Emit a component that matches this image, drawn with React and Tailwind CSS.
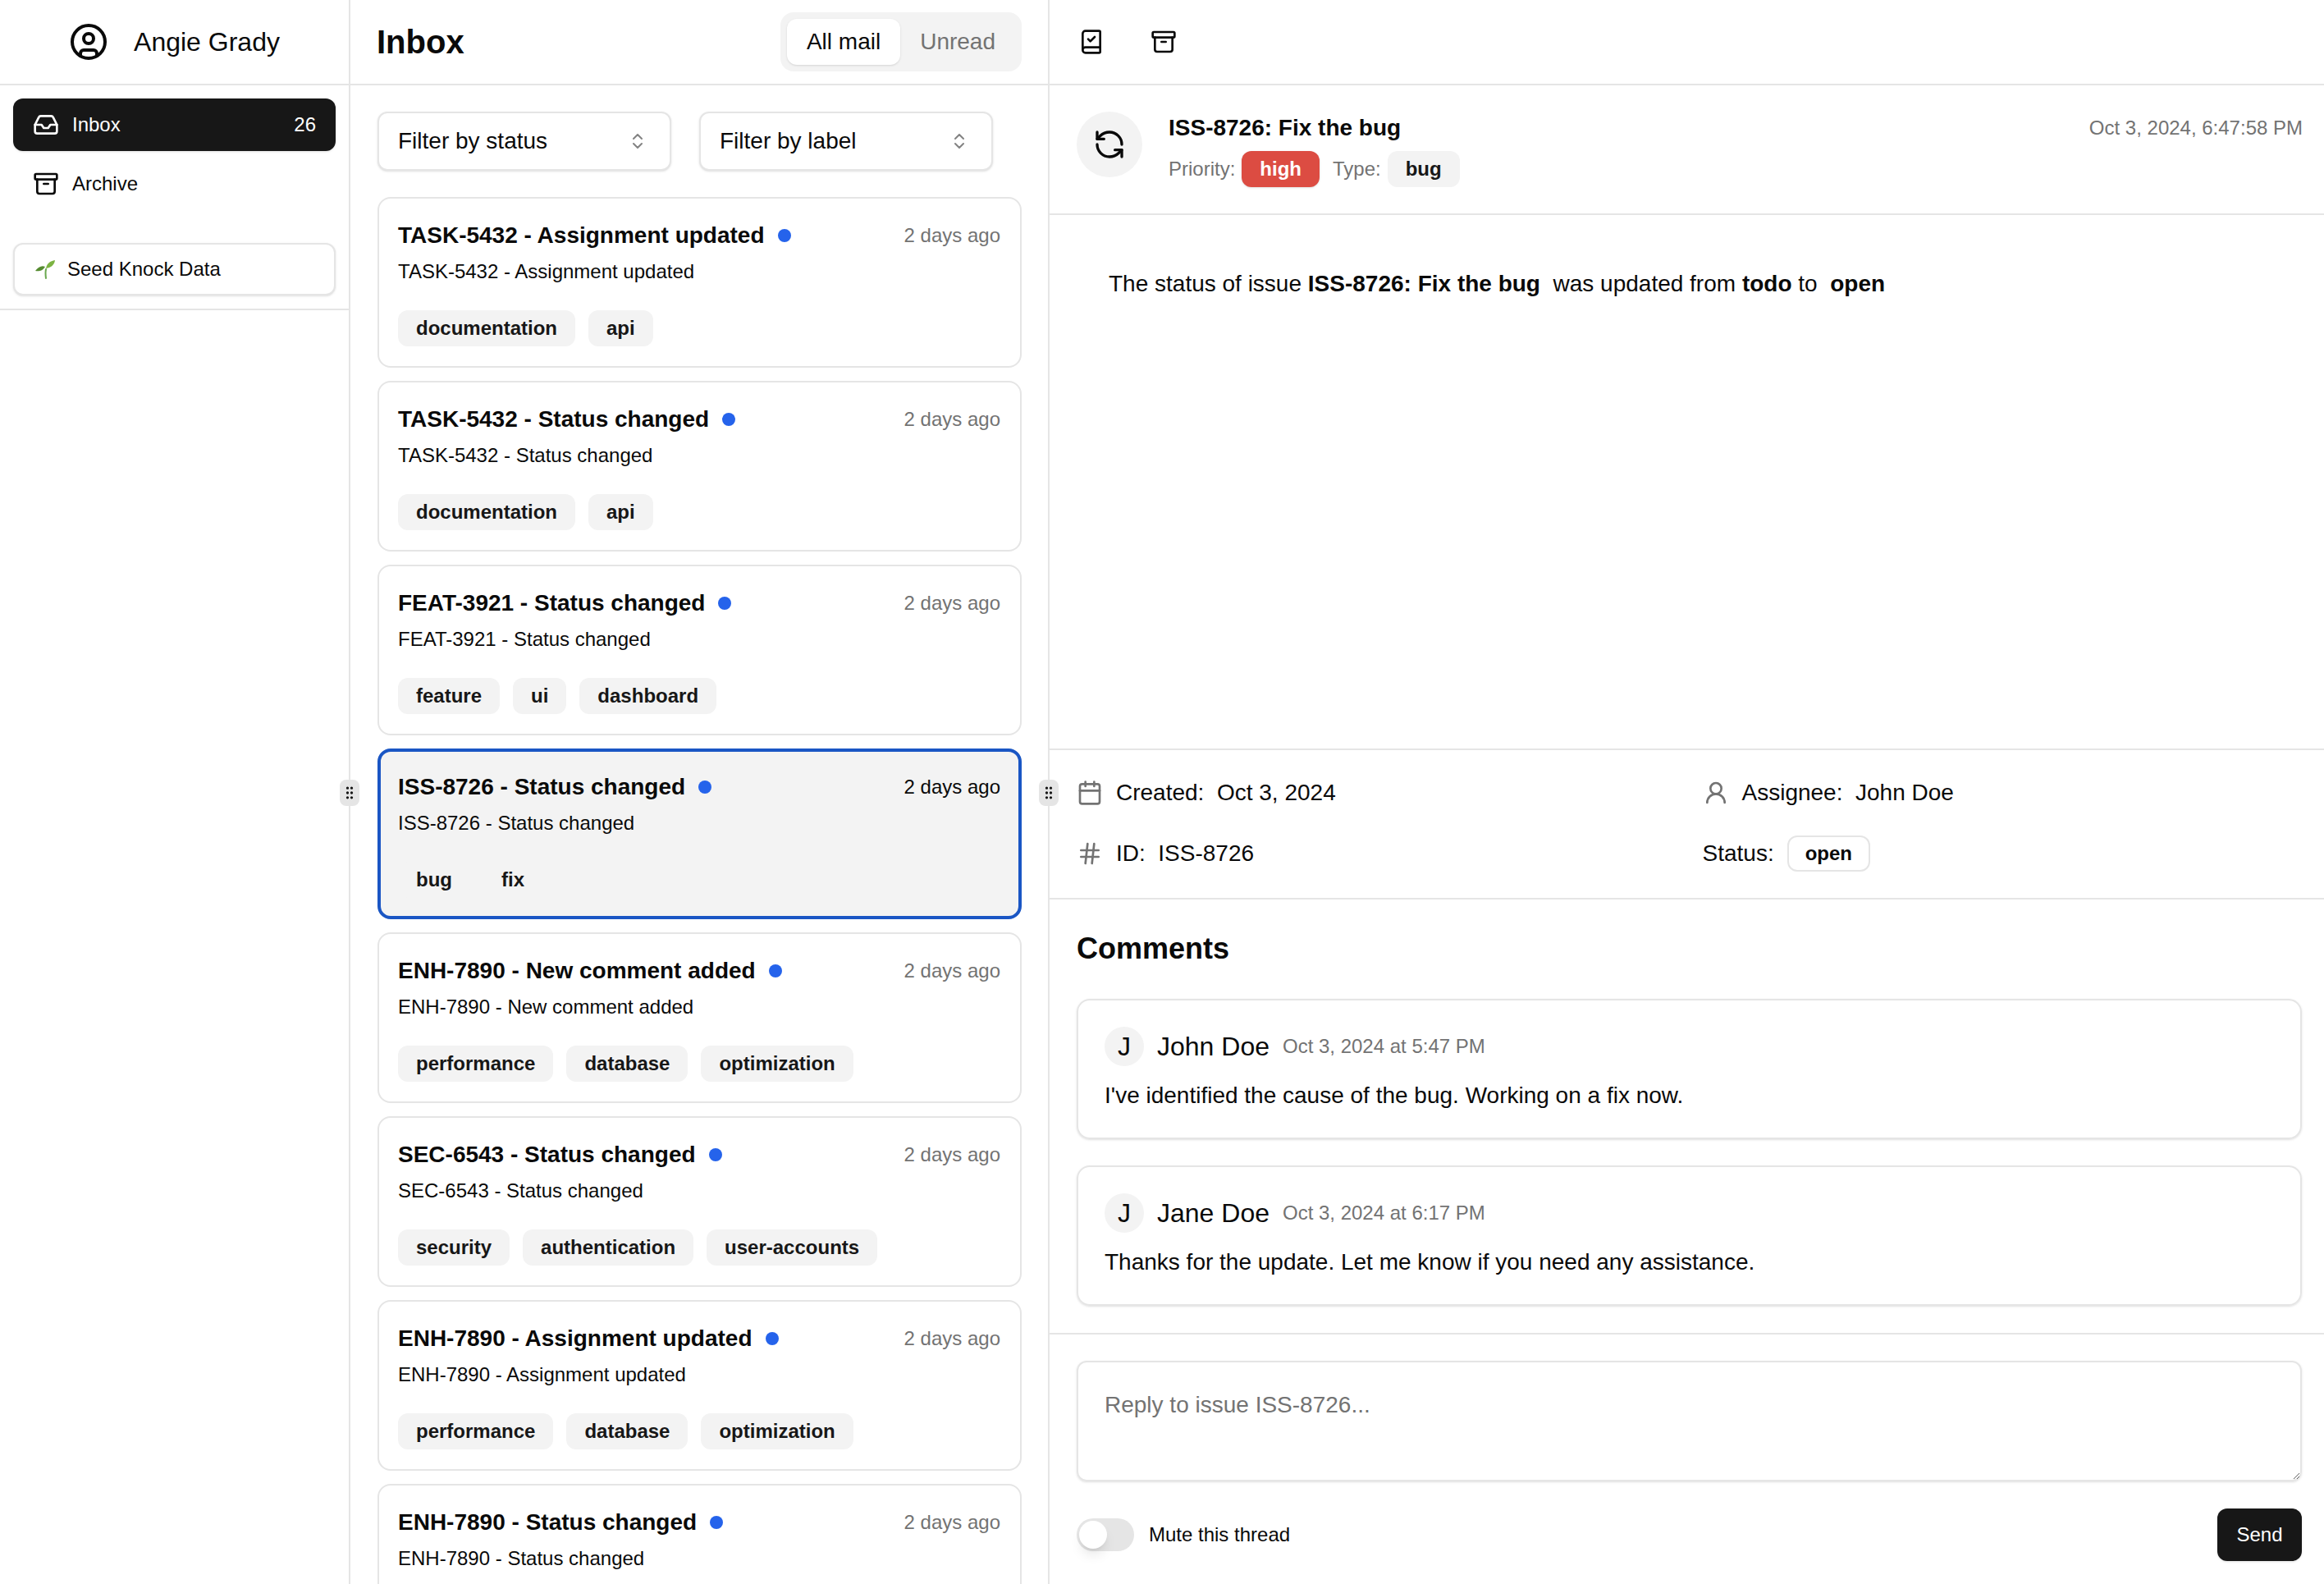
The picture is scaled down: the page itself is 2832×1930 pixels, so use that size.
import React from 'react';
import {
  Archive,
  BookCheck,
  Calendar,
  ChevronsUpDown,
  CircleUser,
  GripVertical,
  Hash,
  Inbox,
  RefreshCcw,
  UserRound,
} from 'lucide-react';

const notifications = [
  { id: 'TASK-5432', event: 'Assignment updated', labels: ['documentation', 'api'] },
  { id: 'TASK-5432', event: 'Status changed', labels: ['documentation', 'api'] },
  { id: 'FEAT-3921', event: 'Status changed', labels: ['feature', 'ui', 'dashboard'] },
  { id: 'ISS-8726', event: 'Status changed', labels: ['bug', 'fix'], selected: true },
  { id: 'ENH-7890', event: 'New comment added', labels: ['performance', 'database', 'optimization'] },
  { id: 'SEC-6543', event: 'Status changed', labels: ['security', 'authentication', 'user-accounts'] },
  { id: 'ENH-7890', event: 'Assignment updated', labels: ['performance', 'database', 'optimization'] },
  { id: 'ENH-7890', event: 'Status changed', labels: [] },
];

const comments = [
  { name: 'John Doe', date: 'Oct 3, 2024 at 5:47 PM', body: "I've identified the cause of the bug. Working on a fix now." },
  { name: 'Jane Doe', date: 'Oct 3, 2024 at 6:17 PM', body: 'Thanks for the update. Let me know if you need any assistance.' },
];

function SproutIcon() {
  return (
    <svg width="26" height="24" viewBox="0 0 26 24" className="shrink-0">
      <path d="M14 23c-.6-4-.6-8 0-11" fill="none" stroke="#6aa84f" strokeWidth="2" strokeLinecap="round" />
      <path d="M14 11C15 5 19 2 25 1c-.5 5-4 9-11 10z" fill="#7cb342" />
      <path d="M13 9C9 7 5 9 1 14c4 1 9 0 12-5z" fill="#558b2f" />
    </svg>
  );
}

function FilterSelect({ label }) {
  return (
    <button className="w-[358px] h-[72px] pl-[23px] pr-[27px] flex items-center justify-between bg-white border-2 border-[#e5e5e5] rounded-[12px] shadow-sm text-[28px]">
      <span>{label}</span>
      <ChevronsUpDown size={24} strokeWidth={2} className="opacity-50" />
    </button>
  );
}

function NotificationCard({ item }) {
  return (
    <div
      className={`h-[208px] shrink-0 rounded-[16px] ${
        item.selected ? 'border-[4px] border-[#1a56c4] bg-[#f3f3f3] pl-[21px] pr-[22px] pt-[23px]' : 'border-2 border-[#e5e5e5] bg-white pl-[23px] pr-[24px] pt-[25px]'
      }`}
    >
      <div className="flex items-center justify-between h-[40px]">
        <div className="flex items-center gap-[16px]">
          <span className="text-[28px] font-bold">
            {item.id} - {item.event}
          </span>
          <span className="w-[16px] h-[16px] rounded-full bg-[#2563eb]" />
        </div>
        <span className={`text-[24px] ${item.selected ? 'text-[#0a0a0a]' : 'text-[#737373]'}`}>2 days ago</span>
      </div>
      <div className="mt-[8px] text-[24px] leading-[32px]">
        {item.id} - {item.event}
      </div>
      <div className="mt-[31px] flex gap-[16px]">
        {item.labels.map((label) => (
          <span key={label} className="h-[44px] px-[22px] flex items-center rounded-[12px] bg-[#f3f3f3] text-[24px] font-bold text-[#171717]">
            {label}
          </span>
        ))}
      </div>
    </div>
  );
}

function ResizeHandle() {
  return (
    <div className="absolute z-10 top-[950px] right-[-13px] w-[24px] h-[32px] rounded-[8px] bg-[#e5e5e5] flex items-center justify-center">
      <GripVertical size={20} strokeWidth={2} className="text-[#171717]" />
    </div>
  );
}

export default function App() {
  return (
    <div className="flex h-[1930px] overflow-hidden bg-white text-[#0a0a0a] font-['Liberation_Sans',Arial,sans-serif]">
      {/* Sidebar */}
      <aside className="relative w-[427px] shrink-0 border-r-2 border-[#e5e5e5]">
        <div className="h-[104px] border-b-2 border-[#e5e5e5] flex items-center justify-center gap-[31px]">
          <CircleUser size={48} strokeWidth={2} />
          <span className="text-[32px]">Angie Grady</span>
        </div>
        <div className="p-[16px] border-b-2 border-[#e5e5e5]">
          <nav className="flex flex-col gap-[8px]">
            <a className="h-[64px] px-[24px] flex items-center gap-[16px] rounded-[12px] bg-[#171717] text-white text-[24px] shadow-sm">
              <Inbox size={32} strokeWidth={2} />
              <span>Inbox</span>
              <span className="ml-auto">26</span>
            </a>
            <a className="h-[64px] px-[24px] flex items-center gap-[16px] text-[24px]">
              <Archive size={32} strokeWidth={2} />
              <span>Archive</span>
            </a>
          </nav>
          <button className="mt-[40px] w-full h-[64px] px-[24px] flex items-center gap-[14px] bg-white border-2 border-[#e5e5e5] rounded-[12px] shadow-sm text-[24px]">
            <SproutIcon />
            <span>Seed Knock Data</span>
          </button>
        </div>
        <ResizeHandle />
      </aside>

      {/* Inbox list */}
      <section className="relative w-[852px] shrink-0 border-r-2 border-[#e5e5e5] flex flex-col">
        <div className="h-[104px] shrink-0 border-b-2 border-[#e5e5e5] pl-[32px] pr-[32px] flex items-center justify-between">
          <h1 className="text-[40px] font-bold">Inbox</h1>
          <div className="h-[72px] p-[8px] flex rounded-[16px] bg-[#f3f3f3] text-[28px]">
            <button className="h-[56px] px-[24px] rounded-[12px] bg-white shadow-sm">All mail</button>
            <button className="h-[56px] px-[24px] text-[#737373]">Unread</button>
          </div>
        </div>
        <div className="pl-[33px] pr-[32px] pt-[32px] flex flex-col gap-[16px] overflow-hidden">
          <div className="flex gap-[34px] mb-[16px] shrink-0">
            <FilterSelect label="Filter by status" />
            <FilterSelect label="Filter by label" />
          </div>
          {notifications.map((item, i) => (
            <NotificationCard key={i} item={item} />
          ))}
        </div>
        <ResizeHandle />
      </section>

      {/* Detail */}
      <main className="flex-1 min-w-0 flex flex-col">
        <div className="h-[104px] shrink-0 border-b-2 border-[#e5e5e5] pl-[15px] flex items-center gap-[16px]">
          <button className="w-[72px] h-[72px] flex items-center justify-center">
            <BookCheck size={32} strokeWidth={2} />
          </button>
          <button className="w-[72px] h-[72px] flex items-center justify-center">
            <Archive size={32} strokeWidth={2} />
          </button>
        </div>

        <div className="h-[158px] shrink-0 border-b-2 border-[#e5e5e5] pl-[33px] pr-[26px] pt-[32px] flex items-start gap-[32px]">
          <div className="w-[80px] h-[80px] shrink-0 rounded-full bg-[#f3f3f3] flex items-center justify-center">
            <RefreshCcw size={40} strokeWidth={2} />
          </div>
          <div className="flex-1">
            <div className="text-[28px] leading-[40px] font-bold">ISS-8726: Fix the bug</div>
            <div className="mt-[8px] flex items-center text-[24px]">
              <span className="text-[#737373]">Priority:</span>
              <span className="ml-[8px] h-[44px] px-[22px] flex items-center rounded-[12px] bg-[#dc4c42] text-white font-bold shadow-sm">high</span>
              <span className="ml-[16px] text-[#737373]">Type:</span>
              <span className="ml-[8px] h-[44px] px-[22px] flex items-center rounded-[12px] bg-[#f3f3f3] text-[#171717] font-bold">bug</span>
            </div>
          </div>
          <span className="text-[24px] leading-[40px] text-[#737373]">Oct 3, 2024, 6:47:58 PM</span>
        </div>

        <div className="flex-1 pl-[72px] pt-[64px] text-[28px] leading-[40px]">
          The status of issue <b>ISS-8726: Fix the bug</b>&nbsp; was updated from <b>todo</b> to&nbsp; <b>open</b>
        </div>

        <div className="shrink-0 border-y-2 border-[#e5e5e5] pl-[33px] pr-[27px] py-[32px] grid grid-cols-2 gap-x-[32px] gap-y-[32px] text-[28px]">
          <div className="h-[40px] flex items-center gap-[16px]">
            <Calendar size={32} strokeWidth={2} className="text-[#737373]" />
            <span>Created:&nbsp; Oct 3, 2024</span>
          </div>
          <div className="h-[40px] flex items-center gap-[16px]">
            <UserRound size={32} strokeWidth={2} className="text-[#737373]" />
            <span>Assignee:&nbsp; John Doe</span>
          </div>
          <div className="h-[44px] flex items-center gap-[16px]">
            <Hash size={32} strokeWidth={2} className="text-[#737373]" />
            <span>ID:&nbsp; ISS-8726</span>
          </div>
          <div className="h-[44px] flex items-center gap-[16px]">
            <span>Status:</span>
            <span className="h-[44px] px-[20px] flex items-center rounded-[12px] border-2 border-[#e5e5e5] text-[24px] font-bold">open</span>
          </div>
        </div>

        <div className="shrink-0 border-b-2 border-[#e5e5e5] pl-[33px] pr-[27px] pt-[38px] pb-[33px]">
          <h2 className="text-[36px] leading-[44px] font-bold">Comments</h2>
          <div className="mt-[39px] flex flex-col gap-[32px]">
            {comments.map((c) => (
              <div key={c.name} className="h-[171px] border-2 border-[#e5e5e5] rounded-[16px] p-[32px] shadow-sm">
                <div className="flex items-center gap-[16px]">
                  <span className="w-[48px] h-[48px] rounded-full bg-[#f3f3f3] flex items-center justify-center text-[32px]">J</span>
                  <span className="text-[32px]">{c.name}</span>
                  <span className="text-[24px] text-[#737373]">{c.date}</span>
                </div>
                <p className="mt-[16px] text-[28px] leading-[40px]">{c.body}</p>
              </div>
            ))}
          </div>
        </div>

        <div className="h-[304px] shrink-0 pl-[33px] pr-[27px] pt-[32px]">
          <textarea
            placeholder="Reply to issue ISS-8726..."
            className="block w-full h-[147px] px-[32px] py-[32px] border-2 border-[#e5e5e5] rounded-[12px] shadow-sm text-[28px] leading-[40px] outline-none placeholder:text-[#737373]"
          />
          <div className="mt-[33px] flex items-center justify-between">
            <div className="flex items-center gap-[18px]">
              <div className="w-[70px] h-[40px] p-[3px] rounded-full bg-[#e5e5e5]">
                <div className="w-[34px] h-[34px] rounded-full bg-white shadow-lg" />
              </div>
              <span className="text-[24px]">Mute this thread</span>
            </div>
            <button className="h-[64px] w-[103px] rounded-[12px] bg-[#171717] text-white text-[24px] shadow-sm">Send</button>
          </div>
        </div>
      </main>
    </div>
  );
}
